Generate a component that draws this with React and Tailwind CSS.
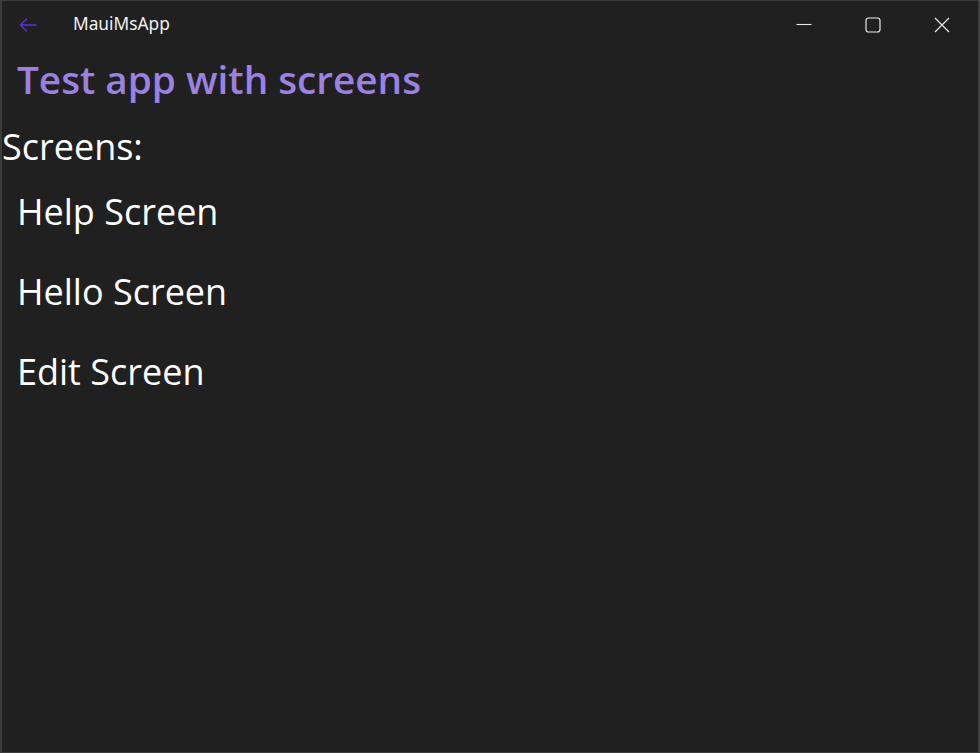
import React from "react";

const screens = ["Help Screen", "Hello Screen", "Edit Screen"];

const TitleBar = () => (
  <div className="flex h-[48px] items-center">
    <div className="flex w-[52px] justify-center">
      <svg width="18" height="16" viewBox="0 0 18 16" fill="none" stroke="#5634d6" strokeWidth="1.3">
        <path d="M17.5 8H1.5M8 1.5L1.5 8l6.5 6.5" />
      </svg>
    </div>
    <span className="mb-[2px] ml-[19px] text-[17.3px] leading-none text-[#f0f0f0]" style={{ fontFamily: "'Segoe UI', 'Noto Sans', sans-serif" }}>
      MauiMsApp
    </span>
    <div className="ml-auto mr-[2px] flex h-full">
      <button className="flex w-[69px] items-center justify-center">
        <svg width="16" height="16" viewBox="0 0 16 16" stroke="#e8e8e8" strokeWidth="1.1">
          <path d="M0.5 7.5h15" />
        </svg>
      </button>
      <button className="flex w-[69px] items-center justify-center">
        <svg width="16" height="16" viewBox="0 0 16 16" fill="none" stroke="#e8e8e8" strokeWidth="1.2">
          <rect x="1" y="1" width="14" height="14" rx="2.5" />
        </svg>
      </button>
      <button className="flex w-[69px] items-center justify-center">
        <svg width="16" height="16" viewBox="0 0 16 16" stroke="#e8e8e8" strokeWidth="1.2">
          <path d="M1 1l14 14M15 1L1 15" />
        </svg>
      </button>
    </div>
  </div>
);

export default function App() {
  return (
    <div className="h-[753px] w-[980px] overflow-hidden border border-[#3c3c3c] border-l-2 border-r-2 bg-[#202020]">
      <TitleBar />
      <div style={{ fontFamily: "'Open Sans', 'Noto Sans', sans-serif" }}>
        <h1 className="ml-[15px] mt-[2px] text-[38.7px] font-semibold leading-[56px] text-[#9b82e0]">
          Test app with screens
        </h1>
        <div className="mt-[16px] text-[36px] leading-[48px] text-white">Screens:</div>
        <div className="mt-[10px] flex flex-col">
          {screens.map((s) => (
            <div key={s} className="ml-[15px] h-[80px] text-[36px] leading-[62px] text-white">
              {s}
            </div>
          ))}
        </div>
      </div>
    </div>
  );
}
